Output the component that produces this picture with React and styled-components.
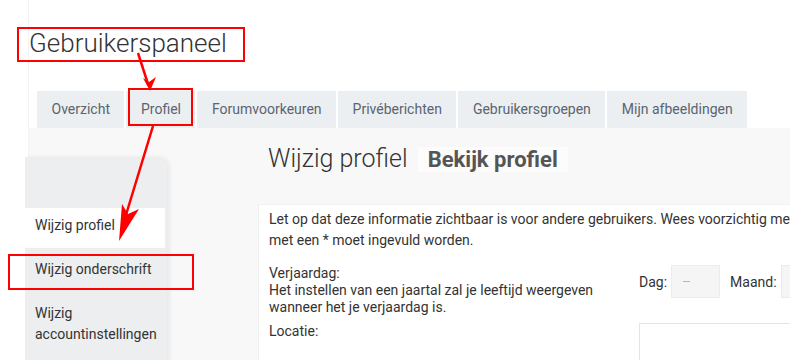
import React from 'react'
import styled, { createGlobalStyle } from 'styled-components'

const tabs = ['Overzicht', 'Profiel', 'Forumvoorkeuren', 'Privéberichten', 'Gebruikersgroepen', 'Mijn afbeeldingen']
const menu = ['Wijzig profiel', 'Wijzig onderschrift', 'Wijzig accountinstellingen']

export default function App() {
    return (
        <Page>
            <GlobalStyle />
            <Frame>
                <Header>
                    <Title>Gebruikerspaneel</Title>
                    <Tabs>
                        {tabs.map((t) => (
                            <Tab key={t}>{t}</Tab>
                        ))}
                    </Tabs>
                </Header>
                <Body>
                    <Sidebar>
                        {menu.map((m, i) => (
                            <MenuItem key={m} $active={i === 0}>{m}</MenuItem>
                        ))}
                    </Sidebar>
                    <Main>
                        <Heading>
                            Wijzig profiel <SubLink>Bekijk profiel</SubLink>
                        </Heading>
                        <Panel>
                            <Notice>
                                Let op dat deze informatie zichtbaar is voor andere gebruikers. Wees voorzichtig met
                                wat je invult. Velden met een * moet ingevuld worden.
                            </Notice>
                            <FormRow>
                                <Label>
                                    Verjaardag:<br />
                                    Het instellen van een jaartal zal je leeftijd weergeven wanneer het je verjaardag is.
                                </Label>
                                <Field>
                                    Dag:
                                    <Select>--</Select>
                                    Maand:
                                    <Select>--</Select>
                                </Field>
                            </FormRow>
                            <FormRow>
                                <Label>Locatie:</Label>
                                <Field>
                                    <TextBox />
                                </Field>
                            </FormRow>
                        </Panel>
                    </Main>
                </Body>
            </Frame>

            <Marker style={{ left: 17, top: 27, width: 228, height: 35 }} />
            <Marker style={{ left: 128, top: 88, width: 65, height: 38 }} />
            <Marker style={{ left: 8, top: 254, width: 186, height: 36 }} />
            <Arrows width="790" height="360" viewBox="0 0 790 360">
                <line x1="138" y1="53" x2="148" y2="84" />
                <polygon points="150,91 143,78 149,82 156,77" />
                <line x1="153" y1="126" x2="122" y2="228" />
                <polygon points="119,241 122,204 128,214 139,209" />
            </Arrows>
        </Page>
    )
}

const GlobalStyle = createGlobalStyle`
    body {
        margin: 0;
        background: #fff;
        font-family: Roboto, "Liberation Sans", sans-serif;
        color: #333;
    }
`
const Page = styled.div`
    position: relative;
    width: 790px;
    height: 360px;
    overflow: hidden;
    background: #fff;
`
const Frame = styled.div`
    margin-left: 28px;
    height: 100%;
    border-left: 1px solid #f3f3f3;
    display: flex;
    flex-direction: column;
`
const Header = styled.div`
    padding-top: 28px;
    background: #fff;
`
const Title = styled.h1`
    margin: 0;
    font-size: 26px;
    font-weight: 300;
    line-height: 31px;
    color: #333;
`
const Tabs = styled.div`
    display: flex;
    gap: 2px;
    margin: 32px 0 0 8px;
`
const Tab = styled.div`
    height: 37px;
    line-height: 37px;
    padding: 0 14.5px;
    background: #eceff1;
    color: #5a6470;
    font-size: 14px;
`
const Body = styled.div`
    flex: 1;
    display: flex;
    background: #f8f8f8;
`
const Sidebar = styled.div`
    width: 142px;
    margin: 29px 0 0 -4px;
    padding-top: 51px;
    background: #eceef0;
    border-radius: 0 10px 0 0;
    box-shadow: 3px 0 4px rgba(0, 0, 0, 0.06);
`
const MenuItem = styled.div`
    margin: 0 2px 4px 0;
    padding: 7px 10px 12px;
    font-size: 14px;
    line-height: 21px;
    color: #333;
    background: ${(p) => (p.$active ? '#fff' : 'transparent')};
`
const Main = styled.div`
    flex: 1;
    margin-left: 91px;
    display: flex;
    flex-direction: column;
`
const Heading = styled.h2`
    margin: 16px 0 29px;
    padding-left: 10px;
    font-size: 25px;
    font-weight: 300;
    line-height: 30px;
    color: #333;
    white-space: nowrap;
`
const SubLink = styled.span`
    margin-left: 4px;
    padding: 0 10px;
    background: #fcfcfc;
    font-size: 22px;
    font-weight: 700;
    color: #555;
`
const Panel = styled.div`
    flex: 1;
    padding: 4px 10px;
    background: #fff;
    border-left: 1px solid #f0f0f0;
    border-top: 1px solid #f0f0f0;
    font-size: 14px;
    color: #333;
`
const Notice = styled.p`
    margin: 0 0 14px;
    width: 672px;
    line-height: 21px;
`
const FormRow = styled.div`
    display: flex;
    align-items: flex-start;
    gap: 30px;
    margin-bottom: 7px;
`
const Label = styled.div`
    width: 340px;
    line-height: 17px;
`
const Field = styled.div`
    display: flex;
    align-items: center;
    gap: 4px;
    flex: 1;
    white-space: nowrap;
`
const Select = styled.div`
    width: 36px;
    height: 31px;
    line-height: 31px;
    padding-left: 11px;
    margin-right: 6px;
    background: #f5f5f5;
    border: 1px solid #ececec;
    color: #aaa;
    font-size: 12px;
    flex-shrink: 0;
`
const TextBox = styled.div`
    width: 200px;
    height: 80px;
    border: 1px solid #e4e4e4;
    background: #fff;
    flex-shrink: 0;
`
const Marker = styled.div`
    position: absolute;
    box-sizing: border-box;
    border: 2px solid #f00;
    pointer-events: none;
`
const Arrows = styled.svg`
    position: absolute;
    left: 0;
    top: 0;
    pointer-events: none;
    line {
        stroke: #f00;
        stroke-width: 2.5;
    }
    polygon {
        fill: #f00;
    }
`
